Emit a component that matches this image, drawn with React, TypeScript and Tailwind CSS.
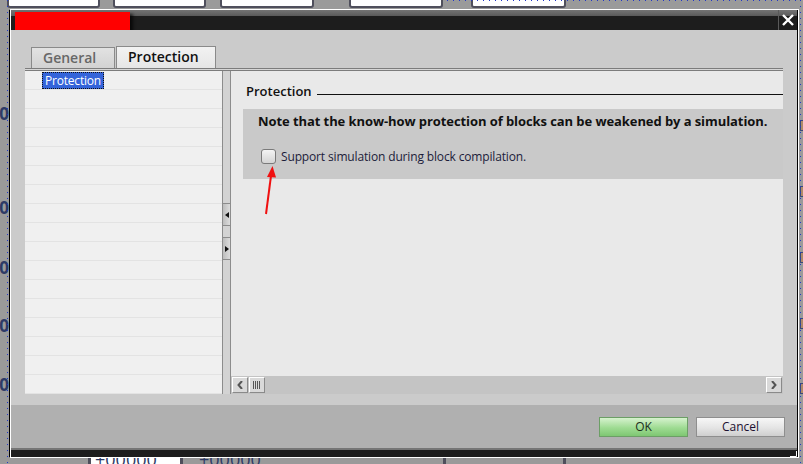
import React from "react";

const TOP_BOXES = [
  { left: 7, width: 93 },
  { left: 113, width: 93 },
  { left: 220, width: 94 },
  { left: 349, width: 94 },
  { left: 471, width: 95 },
];

const LEFT_MARKS = [105, 199, 259, 317, 376];
const RIGHT_MARKS = [120, 186, 252, 318, 383];

function Backdrop() {
  return (
    <>
      {TOP_BOXES.map((b) => (
        <div
          key={b.left}
          className="absolute top-[-3px] h-[11px] bg-white border-2 border-[#4f4f5c] rounded-b-[3px]"
          style={{ left: b.left, width: b.width }}
        />
      ))}
      {LEFT_MARKS.map((y) => (
        <div
          key={y}
          className="absolute left-[-30px] w-[39px] text-right text-[17px] font-bold leading-[18px] text-[#2d3a66]"
          style={{ top: y }}
        >
          000
        </div>
      ))}
      {RIGHT_MARKS.map((y) => (
        <div
          key={y}
          className="absolute left-[800px] w-[6px] h-[11px] border border-[#3b4a7a] bg-[#b08a6a]"
          style={{ top: y }}
        />
      ))}
      <svg className="absolute left-0 top-0" width="803" height="464">
        <line x1="7.5" y1="0" x2="7.5" y2="464" stroke="#2238c8" strokeWidth="1" strokeDasharray="1 5" />
        <line x1="800.5" y1="0" x2="800.5" y2="464" stroke="#2238c8" strokeWidth="1" strokeDasharray="1 5" />
        <line x1="447" y1="0.5" x2="800" y2="0.5" stroke="#2238c8" strokeWidth="1" strokeDasharray="1 5" />
      </svg>
      {/* bottom fields peeking out below the dialog */}
      <div className="absolute left-[88px] top-[449px] w-[95px] h-[20px] bg-white border-x-[3px] border-[#4f4f5c]">
        <span className="block pl-[4px] text-[18px] leading-[20px] text-[#2d3a66]">+00000</span>
      </div>
      <div className="absolute left-[199px] top-[449px] text-[18px] leading-[20px] text-[#2d3a66]">+00000</div>
      <div className="absolute left-[443px] top-[456px] w-[3px] h-[8px] bg-[#4f4f5c]" />
      <div className="absolute left-[563px] top-[456px] w-[3px] h-[8px] bg-[#4f4f5c]" />
    </>
  );
}

function RedArrow() {
  return (
    <svg className="absolute left-[258px] top-[160px]" width="22" height="58" viewBox="0 0 22 58">
      <line x1="8" y1="54" x2="13.5" y2="12" stroke="#f01010" strokeWidth="2" />
      <polygon points="14.5,6 9,17 18,17.5" fill="#f01010" />
    </svg>
  );
}

function ScrollButton({ children }: { children: React.ReactNode }) {
  return (
    <div className="w-[16px] h-[16px] flex items-center justify-center bg-[#d9d9d9] border border-t-white border-l-white border-r-[#8a8a8a] border-b-[#8a8a8a]">
      {children}
    </div>
  );
}

export default function App() {
  const rows = Array.from({ length: 17 }, (_, i) => i);

  return (
    <div className="relative w-[803px] h-[464px] overflow-hidden bg-[#9a9a9a] font-['Open_Sans',sans-serif]">
      <Backdrop />

      {/* Dialog */}
      <div className="absolute left-[9px] top-[9px] w-[790px] h-[449px] border border-white border-l-black">
        <div className="w-full h-full flex flex-col border-l border-l-white border-r border-r-black">
          {/* Title bar */}
          <div className="h-[20px] flex bg-[linear-gradient(#747474_0px,#5a5a5a_6px,#1d1d1d_6px,#1d1d1d_100%)]">
            <div className="ml-[4px] mt-[2px] w-[115px] h-[18px] bg-[#ff0000] shadow-[3px_2px_3px_rgba(0,0,0,0.7)]" />
            <div className="flex-1" />
            <div className="w-[19px] h-full border-l border-[#5a5a5a] flex items-center justify-center">
              <svg width="14" height="14" viewBox="0 0 14 14">
                <path d="M2 2 L12 12 M12 2 L2 12" stroke="white" strokeWidth="2.4" />
              </svg>
            </div>
          </div>

          {/* Body */}
          <div className="h-[375px] bg-[#cbcbcb] pt-[16px]">
            {/* Tabs */}
            <div className="flex items-end gap-[1px] ml-[20px] h-[22px]">
              <div className="w-[84px] h-[21px] border border-b-0 border-[#8a8a8a] bg-[linear-gradient(#e2e2e2,#d2d2d2)] pl-[11px] text-[14px] leading-[19px] font-semibold text-[#676767]">
                General
              </div>
              <div className="w-[100px] h-[22px] border border-b-0 border-[#8a8a8a] bg-[linear-gradient(#f2f2f2,#e6e6e6)] pl-[11px] text-[14px] leading-[20px] font-semibold text-[#111]">
                Protection
              </div>
            </div>

            {/* Frame */}
            <div className="ml-[14px] w-[758px]">
              <div className="h-[3px] bg-[#d6d6d6] border-y border-[#7c7c7c]" />
              <div className="h-[323px] flex">
                {/* Tree panel */}
                <div className="w-[197px] bg-[#f0f0f0] flex flex-col">
                  {rows.map((i) => (
                    <div key={i} className="h-[19px] border-b border-[#e3e3e3] flex items-start">
                      {i === 0 && (
                        <div className="ml-[17px] mt-[1px] h-[17px] px-[2px] bg-[#3464da] border border-dotted border-[#111] text-[12px] leading-[15px] tracking-[-0.2px] text-white">
                          Protection
                        </div>
                      )}
                    </div>
                  ))}
                </div>

                {/* Splitter */}
                <div className="w-[9px] bg-[#d3d3d3] border-x border-[#8c8c8c] flex flex-col pt-[132px]">
                  <div className="h-[23px] border-y border-[#8c8c8c] bg-[linear-gradient(90deg,#bdbdbd,#dcdcdc)] flex items-center justify-center">
                    <svg width="4" height="6" viewBox="0 0 4 6">
                      <polygon points="4,0 0,3 4,6" fill="#111" />
                    </svg>
                  </div>
                  <div className="h-[11px]" />
                  <div className="h-[23px] border-y border-[#8c8c8c] bg-[linear-gradient(90deg,#bdbdbd,#dcdcdc)] flex items-center justify-center">
                    <svg width="4" height="6" viewBox="0 0 4 6">
                      <polygon points="0,0 4,3 0,6" fill="#111" />
                    </svg>
                  </div>
                </div>

                {/* Property page */}
                <div className="w-[552px] bg-[#e9e9e9] flex flex-col">
                  <div className="flex items-center h-[38px] pt-[1px] pl-[15px]">
                    <span className="text-[13px] font-semibold text-[#111] leading-[16px]">Protection</span>
                    <div className="flex-1 ml-[5px] mt-[8px] h-[1px] bg-[#111]" />
                  </div>
                  <div className="ml-[12px] h-[70px] bg-[#c9c9c9] pt-[2px]">
                    <div className="pl-[15px] text-[13px] leading-[20px] font-bold tracking-[-0.08px] text-[#111]">
                      Note that the know-how protection of blocks can be weakened by a simulation.
                    </div>
                    <div className="flex items-center gap-[5px] mt-[18px] pl-[18px]">
                      <div className="w-[15px] h-[15px] rounded-[3px] border border-[#7a7a7a] bg-[linear-gradient(#f4f4f4,#d4d4d4)]" />
                      <span className="text-[12px] leading-[15px] tracking-[-0.15px] text-[#1c1c3a]">Support simulation during block compilation.</span>
                    </div>
                  </div>
                  <div className="flex-1" />
                  <div className="h-[18px] bg-[#c4c4c4] flex items-center pl-[1px] pr-[1px] gap-[1px]">
                    <ScrollButton>
                      <svg width="6" height="8" viewBox="0 0 6 8">
                        <path d="M5 0 L1.5 4 L5 8" stroke="#555" strokeWidth="2" fill="none" />
                      </svg>
                    </ScrollButton>
                    <ScrollButton>
                      <svg width="8" height="8" viewBox="0 0 8 8">
                        <path d="M0.5 0 V8 M2.5 0 V8 M4.5 0 V8 M6.5 0 V8" stroke="#555" strokeWidth="1" />
                      </svg>
                    </ScrollButton>
                    <div className="flex-1" />
                    <ScrollButton>
                      <svg width="6" height="8" viewBox="0 0 6 8">
                        <path d="M1 0 L4.5 4 L1 8" stroke="#555" strokeWidth="2" fill="none" />
                      </svg>
                    </ScrollButton>
                  </div>
                </div>
              </div>
            </div>
          </div>

          {/* Footer */}
          <div className="h-[43px] bg-[#b0b0b0] flex justify-end items-start pt-[12px] pr-[12px] gap-[8px]">
            <button className="w-[89px] h-[20px] border border-[#6c9e66] bg-[linear-gradient(#d6f2ce,#9edb92_55%,#7ec772)] text-[12px] leading-[18px] text-[#1b2e1b]">
              OK
            </button>
            <button className="w-[89px] h-[20px] border border-[#8e8e8e] bg-[linear-gradient(#f7f7f7,#e6e6e6_50%,#cfcfcf)] text-[12px] leading-[18px] text-[#1c1030]">
              Cancel
            </button>
          </div>
          <div className="h-[2px] bg-[#757575]" />
          <div className="flex-1 bg-[#1d1d1d] relative">
            <svg className="absolute right-0 bottom-0" width="7" height="6" viewBox="0 0 7 6">
              <path d="M6.5 0 V5.5 H0" stroke="white" strokeWidth="1" fill="none" />
            </svg>
          </div>
        </div>
      </div>

      <RedArrow />
    </div>
  );
}
